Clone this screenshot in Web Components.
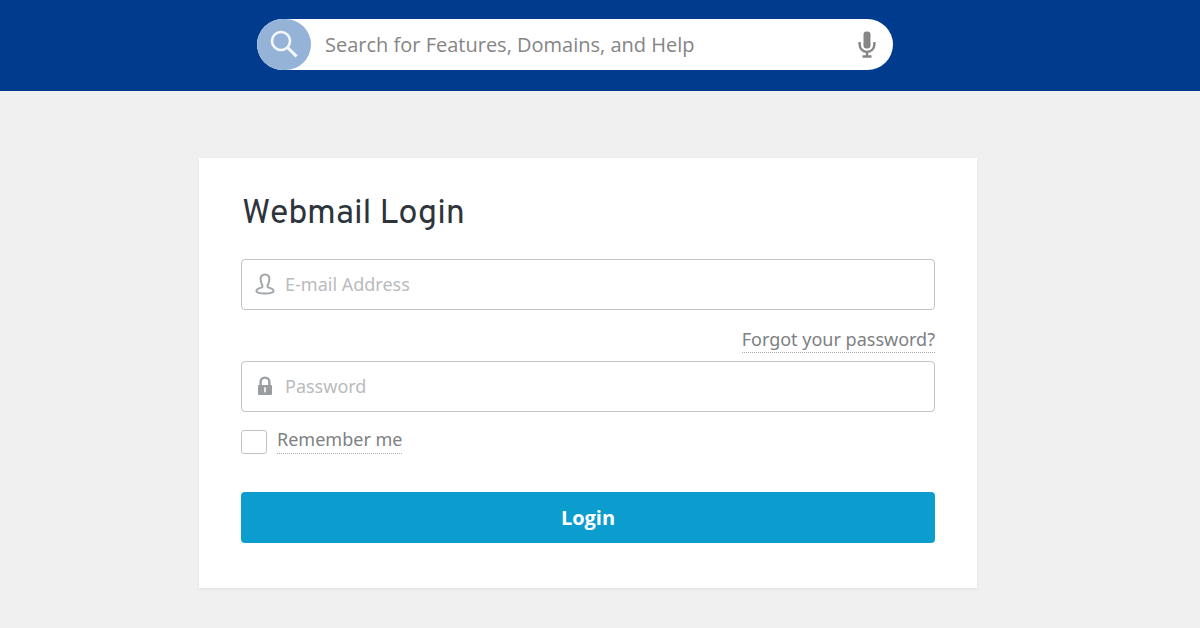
<!DOCTYPE html>
<html lang="en">
<head>
<meta charset="utf-8">
<meta name="viewport" content="width=device-width, initial-scale=1">
<title>Webmail Login</title>
<style>
  html { height: 100%; }
  body {
    margin: 0;
    min-height: 100%;
    background: #f0f0f0;
    color: #7d8184;
    font-family: "Noto Sans", "Open Sans", sans-serif;
    font-size: 18px;
    line-height: 24px;
  }
</style>
</head>
<body>
<webmail-page>
  <site-search slot="header"></site-search>
  <login-card heading="Webmail Login">
    <text-field type="email" label="E-mail Address" autocomplete="username">
      <user-icon slot="icon"></user-icon>
    </text-field>
    <dotted-link slot="aside" href="#forgot">Forgot your password?</dotted-link>
    <text-field slot="secret" type="password" label="Password" autocomplete="current-password">
      <lock-icon slot="icon"></lock-icon>
    </text-field>
    <check-option slot="options">Remember me</check-option>
    <submit-button slot="action">Login</submit-button>
  </login-card>
</webmail-page>

<script>
  class BaseElement extends HTMLElement {
    constructor() {
      super();
      this.attachShadow({ mode: 'open' }).innerHTML = this.constructor.markup;
    }
  }

  class WebmailPage extends BaseElement {
    static markup = `
      <style>
        :host { display: block; }
        header {
          box-sizing: border-box;
          display: flex;
          justify-content: center;
          padding: 19px 50px 21px 0;
          background: #003b8e;
        }
        main {
          display: flex;
          justify-content: center;
          padding: 67px 24px 40px 0;
        }
      </style>
      <header><slot name="header"></slot></header>
      <main><slot></slot></main>`;
  }

  class SiteSearch extends BaseElement {
    static markup = `
      <style>
        :host { display: block; width: 100%; max-width: 636px; }
        form {
          display: flex;
          align-items: center;
          height: 51px;
          overflow: hidden;
          border-radius: 26px;
          background: #fff;
        }
        button {
          flex: none;
          display: grid;
          place-items: center;
          border: 0;
          padding: 0;
          cursor: pointer;
          background: none;
        }
        .go { width: 54px; height: 51px; border-radius: 26px; background: #95b3d7; }
        .mic { width: 52px; height: 51px; }
        input {
          flex: 1;
          min-width: 0;
          height: 51px;
          box-sizing: border-box;
          border: 0;
          outline: 0;
          padding: 0 14px;
          background: none;
          font: inherit;
          font-family: "Open Sans", "Noto Sans", sans-serif;
          font-size: 20px;
          color: #555;
        }
        input::placeholder { color: #858585; opacity: 1; }
        svg { display: block; }
      </style>
      <form role="search">
        <button class="go" type="submit" aria-label="Search">
          <svg width="28" height="30" viewBox="0 0 28 30" fill="none" stroke="#f4f8fc">
            <circle cx="11" cy="11" r="9" stroke-width="2.6"/>
            <path d="M17.6 17.6L26.6 26.4" stroke-width="3"/>
          </svg>
        </button>
        <input type="search" placeholder="Search for Features, Domains, and Help" aria-label="Search">
        <button class="mic" type="button" aria-label="Voice search">
          <svg width="18" height="28" viewBox="0 0 18 28">
            <rect x="5.5" y="0.5" width="7" height="17" rx="3" fill="#868686"/>
            <path d="M1.600 11v2.500a7.400 7.400 0 0 0 14.800 0V11" fill="none" stroke="#868686" stroke-width="2.400"/>
            <path d="M9 21v5M4.500 25.500h9" fill="none" stroke="#868686" stroke-width="2.400"/>
          </svg>
        </button>
      </form>`;
  }

  class LoginCard extends BaseElement {
    static markup = `
      <style>
        :host {
          display: block;
          box-sizing: border-box;
          width: 100%;
          max-width: 778px;
          padding: 35px 42px 45px;
          background: #fff;
          box-shadow: 0 1px 3px rgba(0, 0, 0, .08);
        }
        h1 {
          margin: 0 0 22px;
          padding-left: 1px;
          font: 400 34px/44px Overpass, Roboto, sans-serif;
          color: #2d343b;
        }
        .aside { display: flex; justify-content: flex-end; margin: 17px 0 8px; }
        .options { margin: 15px 0 38px; }
      </style>
      <h1></h1>
      <form>
        <slot></slot>
        <div class="aside"><slot name="aside"></slot></div>
        <slot name="secret"></slot>
        <div class="options"><slot name="options"></slot></div>
        <slot name="action"></slot>
      </form>`;
    connectedCallback() {
      this.shadowRoot.querySelector('h1').textContent = this.getAttribute('heading');
    }
  }

  class TextField extends BaseElement {
    static markup = `
      <style>
        :host { display: block; }
        label {
          box-sizing: border-box;
          display: flex;
          align-items: center;
          gap: 10px;
          height: 51px;
          padding: 0 13px 2px;
          border: 1px solid #c2c3c4;
          border-radius: 4px;
          background: #fff;
        }
        input {
          flex: 1;
          min-width: 0;
          height: 40px;
          border: 0;
          outline: 0;
          padding: 0;
          background: none;
          font: inherit;
          color: #555;
        }
        input::placeholder { color: #b9bbbd; opacity: 1; }
      </style>
      <label><slot name="icon"></slot><input></label>`;
    connectedCallback() {
      const input = this.shadowRoot.querySelector('input');
      input.type = this.getAttribute('type');
      input.placeholder = this.getAttribute('label');
      input.autocomplete = this.getAttribute('autocomplete');
      input.setAttribute('aria-label', this.getAttribute('label'));
    }
  }

  class UserIcon extends BaseElement {
    static markup = `
      <style>:host { display: block; } svg { display: block; }</style>
      <svg width="20" height="22" viewBox="0 0 20 22" fill="none" stroke="#a3a6a8" stroke-width="2" stroke-linejoin="round">
        <path d="M10 1.400C7 1.400 5.600 3.400 5.600 6.200c0 2.500.7 4.200 1.600 5.800.6 1.200.2 2.200-.9 2.600C3.800 15.300 1.400 16 1.400 17.800c0 2 4.100 2.800 8.600 2.800s8.600-.8 8.600-2.800c0-1.800-2.400-2.500-4.900-3.200-1.100-.4-1.500-1.400-.9-2.600.9-1.600 1.600-3.300 1.600-5.800 0-2.800-1.400-4.800-4.400-4.800z"/>
      </svg>`;
  }

  class LockIcon extends BaseElement {
    static markup = `
      <style>:host { display: block; } svg { display: block; }</style>
      <svg width="20" height="20" viewBox="0 0 20 20">
        <path d="M5.600 10V6a4.400 4.400 0 0 1 8.800 0v4" fill="none" stroke="#9a9da0" stroke-width="2.400"/>
        <rect x="3" y="9" width="14" height="10" rx="1" fill="#9a9da0"/>
        <path d="M10 12v3.500" stroke="#fff" stroke-width="2" stroke-linecap="round" opacity=".8"/>
      </svg>`;
  }

  class DottedLink extends BaseElement {
    static markup = `
      <style>
        :host { display: block; }
        a {
          display: block;
          padding-bottom: 1px;
          border-bottom: 1px dotted #a9acae;
          color: inherit;
          text-decoration: none;
        }
      </style>
      <a><slot></slot></a>`;
    connectedCallback() {
      this.shadowRoot.querySelector('a').href = this.getAttribute('href');
    }
  }

  class CheckOption extends BaseElement {
    static markup = `
      <style>
        :host { display: flex; }
        label { display: flex; align-items: flex-start; gap: 10px; cursor: pointer; }
        input {
          appearance: none;
          box-sizing: border-box;
          width: 26px;
          height: 24px;
          margin: 3px 0 0;
          border: 1px solid #bfc1c2;
          border-radius: 3px;
          background: #fff;
        }
        input:checked { background: #0c9ed0; }
        span { padding-bottom: 2px; border-bottom: 1px dotted #a9acae; }
      </style>
      <label><input type="checkbox"><span><slot></slot></span></label>`;
  }

  class SubmitButton extends BaseElement {
    static markup = `
      <style>
        :host { display: block; }
        button {
          display: block;
          width: 100%;
          height: 51px;
          border: 0;
          border-radius: 4px;
          padding: 0;
          background: #0c9dcf;
          color: #fff;
          font: 700 20px/24px "Open Sans", "Noto Sans", sans-serif;
          cursor: pointer;
        }
      </style>
      <button type="submit"><slot></slot></button>`;
  }

  customElements.define('webmail-page', WebmailPage);
  customElements.define('site-search', SiteSearch);
  customElements.define('login-card', LoginCard);
  customElements.define('text-field', TextField);
  customElements.define('user-icon', UserIcon);
  customElements.define('lock-icon', LockIcon);
  customElements.define('dotted-link', DottedLink);
  customElements.define('check-option', CheckOption);
  customElements.define('submit-button', SubmitButton);
</script>
</body>
</html>
